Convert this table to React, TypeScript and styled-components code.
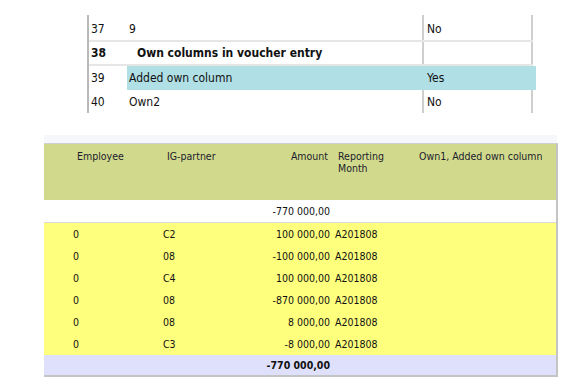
import React from "react";
import styled, { createGlobalStyle } from "styled-components";

const Global = createGlobalStyle`
  html, body { margin: 0; padding: 0; background: #ffffff; }
  body {
    font-family: "DejaVu Sans Condensed", "DejaVu Sans", sans-serif;
    font-stretch: condensed;
    font-size: 12px;
    color: #111;
  }
`;

const Page = styled.div`
  width: 586px;
  height: 392px;
  overflow: hidden;
  display: flex;
  flex-direction: column;
  padding-top: 15px;
  box-sizing: border-box;
`;

/* ---------- top settings table ---------- */
const TopTable = styled.div`
  margin-left: 87px;
  width: 446px;
  display: flex;
  flex-direction: column;
  border-left: 2px solid #b9b9b9;
  box-sizing: border-box;
`;

const TopRow = styled.div<{ $h: number; $line?: boolean; $hl?: boolean }>`
  display: grid;
  grid-template-columns: 38px 297px ${(p) => (p.$hl ? "112px" : "109px")};
  height: ${(p) => p.$h}px;
  margin-right: ${(p) => (p.$hl ? "-3px" : "0")};
  box-sizing: border-box;
  border-bottom: ${(p) => (p.$line ? "2px solid #e6e6e6" : "none")};
`;

const NumCell = styled.div<{ $bold?: boolean }>`
  display: flex;
  align-items: center;
  padding-left: 2px;
  font-weight: ${(p) => (p.$bold ? "bold" : "normal")};
`;

const DescCell = styled.div<{ $bold?: boolean; $hl?: boolean }>`
  display: flex;
  align-items: center;
  padding-left: ${(p) => (p.$bold ? "10px" : "2px")};
  font-weight: ${(p) => (p.$bold ? "bold" : "normal")};
  background: ${(p) => (p.$hl ? "#b0dfe5" : "transparent")};
  border-right: 2px solid ${(p) => (p.$hl ? "#b0dfe5" : "#cfcfcf")};
  box-sizing: border-box;
`;

const ValCell = styled.div<{ $hl?: boolean }>`
  display: flex;
  align-items: center;
  padding-left: 3px;
  background: ${(p) => (p.$hl ? "#b0dfe5" : "transparent")};
  border-right: ${(p) => (p.$hl ? "none" : "2px solid #cfcfcf")};
  box-sizing: border-box;
`;

/* ---------- bottom grid ---------- */
const GridWrap = styled.div`
  margin-top: 22px;
  margin-left: 44px;
  width: 514px;
  display: flex;
  flex-direction: column;
  font-size: 10.5px;
`;

const PaleBand = styled.div`
  height: 8px;
  width: 513px;
  background: #f5f7fa;
`;

const GridBody = styled.div`
  display: flex;
  flex-direction: column;
  border-right: 2px solid #c4c4c4;
  border-bottom: 2px solid #c4c4c4;
  border-top: 1px solid #cfd0d4;
  width: 514px;
  box-sizing: border-box;
`;

const cols = "114px 82px 93px 83px 140px";

type Variant = "head" | "group" | "data" | "total";

const bg: Record<Variant, string> = {
  head: "#d1da8c",
  group: "#ffffff",
  data: "#ffff7e",
  total: "#dfe0fb",
};

const GRow = styled.div<{ $v: Variant; $h: number }>`
  display: grid;
  grid-template-columns: ${cols};
  height: ${(p) => p.$h}px;
  background: ${(p) => bg[p.$v]};
  font-weight: ${(p) => (p.$v === "total" ? "bold" : "normal")};
  border-bottom: ${(p) => (p.$v === "group" ? "1px solid #d9d9d9" : "none")};
  box-sizing: border-box;
  align-items: ${(p) => (p.$v === "head" ? "start" : "center")};
`;

const GCell = styled.div<{ $pad: number; $right?: boolean; $head?: boolean }>`
  text-align: ${(p) => (p.$right ? "right" : "left")};
  padding-left: ${(p) => (p.$right ? 0 : p.$pad)}px;
  padding-right: ${(p) => (p.$right ? p.$pad : 0)}px;
  padding-top: ${(p) => (p.$head ? "6px" : "0")};
  line-height: ${(p) => (p.$head ? "12px" : "normal")};
  color: ${(p) => (p.$head ? "#1c1c2c" : "#111")};
  white-space: nowrap;
`;

const topRows = [
  { n: "37", d: "9", v: "No", h: 24, line: true },
  { n: "38", d: "Own columns in voucher entry", v: "", h: 24, line: true, bold: true },
  { n: "39", d: "Added own column", v: "Yes", h: 24, hl: true },
  { n: "40", d: "Own2", v: "No", h: 23 },
];

const data = [
  ["0", "C2", "100 000,00", "A201808"],
  ["0", "08", "-100 000,00", "A201808"],
  ["0", "C4", "100 000,00", "A201808"],
  ["0", "08", "-870 000,00", "A201808"],
  ["0", "08", "8 000,00", "A201808"],
  ["0", "C3", "-8 000,00", "A201808"],
];

export default function App() {
  return (
    <Page>
      <Global />
      <TopTable>
        <TopRow $h={3}>
          <NumCell />
          <DescCell />
          <ValCell />
        </TopRow>
        {topRows.map((r) => (
          <TopRow key={r.n} $h={r.h} $line={r.line} $hl={r.hl}>
            <NumCell $bold={r.bold}>{r.n}</NumCell>
            <DescCell $bold={r.bold} $hl={r.hl}>
              {r.d}
            </DescCell>
            <ValCell $hl={r.hl}>{r.v}</ValCell>
          </TopRow>
        ))}
      </TopTable>

      <GridWrap>
        <PaleBand />
        <GridBody>
          <GRow $v="head" $h={56}>
            <GCell $head $pad={33}>Employee</GCell>
            <GCell $head $pad={9}>IG-partner</GCell>
            <GCell $head $pad={5} $right>
              Amount
            </GCell>
            <GCell $head $pad={5}>
              Reporting
              <br />
              Month
            </GCell>
            <GCell $head $pad={3}>Own1, Added own column</GCell>
          </GRow>
          <GRow $v="group" $h={23}>
            <GCell $pad={29} />
            <GCell $pad={5} />
            <GCell $pad={3} $right>
              -770 000,00
            </GCell>
            <GCell $pad={2} />
            <GCell $pad={2} />
          </GRow>
          {data.map((r, i) => (
            <GRow key={i} $v="data" $h={22}>
              <GCell $pad={29}>{r[0]}</GCell>
              <GCell $pad={5}>{r[1]}</GCell>
              <GCell $pad={3} $right>
                {r[2]}
              </GCell>
              <GCell $pad={2}>{r[3]}</GCell>
              <GCell $pad={2} />
            </GRow>
          ))}
          <GRow $v="total" $h={20}>
            <GCell $pad={29} />
            <GCell $pad={5} />
            <GCell $pad={3} $right>
              -770 000,00
            </GCell>
            <GCell $pad={2} />
            <GCell $pad={2} />
          </GRow>
        </GridBody>
      </GridWrap>
    </Page>
  );
}
